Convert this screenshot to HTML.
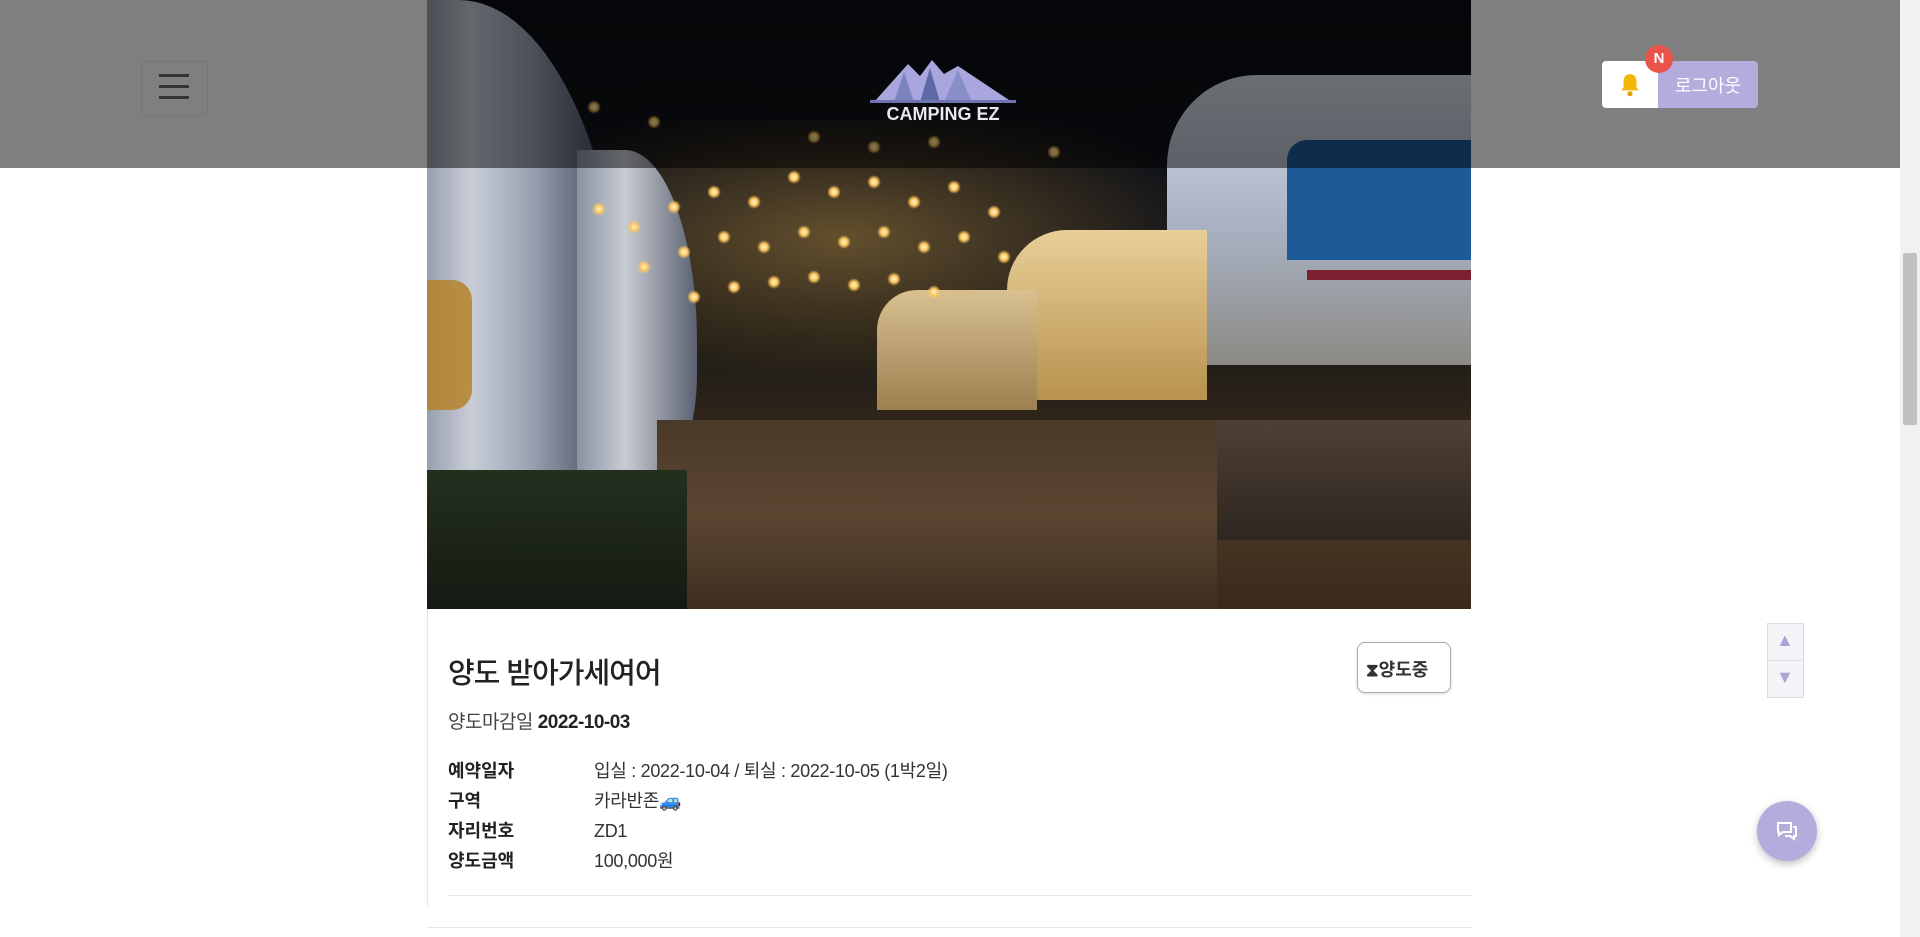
<!DOCTYPE html>
<html><head><meta charset="utf-8"><style>
*{margin:0;padding:0;box-sizing:border-box}
body{width:1920px;height:937px;overflow:hidden;background:#fff;font-family:"Liberation Sans","Noto Sans CJK KR",sans-serif;color:#222;position:relative}
.img{position:absolute;left:427px;top:0;width:1044px;height:609px;overflow:hidden;
background:linear-gradient(180deg,#0a0d12 0%,#10141a 40%,#1a1a16 55%,#2e241a 68%,#4a3624 85%,#3a2a1c 100%)}
.hdr{position:absolute;left:0;top:0;width:1920px;height:168px;background:rgba(0,0,0,0.5)}
.card{position:absolute;left:427px;top:609px;width:1044px;height:297px;border-left:1px solid #e6e6e6}
.sb{position:absolute;left:1900px;top:0;width:20px;height:937px;background:#f1f1f1}
.sb i{position:absolute;left:3px;top:253px;width:14px;height:172px;background:#c1c1c1;border-radius:2px}
.t{position:absolute;white-space:nowrap}
.l{position:absolute;width:14px;height:14px;border-radius:50%;background:radial-gradient(circle,#fff6d0 0,#ffc860 35%,rgba(255,180,60,0) 70%)}
</style></head><body>
<div class="img">
 <div style="position:absolute;left:100px;top:120px;width:700px;height:260px;background:radial-gradient(ellipse at 45% 45%,rgba(255,190,80,.35),rgba(255,170,60,.1) 50%,transparent 70%)"></div>
 <div style="position:absolute;left:-40px;top:0;width:240px;height:540px;background:linear-gradient(90deg,#6c7484 0%,#c9ced8 35%,#9aa2b2 60%,#4a5060 90%);border-radius:0 70% 30% 0"></div>
 <div style="position:absolute;left:150px;top:150px;width:120px;height:320px;background:linear-gradient(90deg,#8a92a2,#c8ccd4 40%,#5a6070);border-radius:0 60% 30% 0"></div>
 <div style="position:absolute;left:0;top:280px;width:45px;height:130px;background:#b5822a;opacity:.85;border-radius:0 20px 20px 0"></div>
 <div style="position:absolute;left:740px;top:75px;width:304px;height:290px;background:linear-gradient(180deg,#d6dbe4,#aab4c6 50%,#8c8a84);border-radius:90px 0 0 0"></div>
 <div style="position:absolute;left:860px;top:140px;width:184px;height:120px;background:#1d5a98;border-radius:20px 0 0 0"></div>
 <div style="position:absolute;left:880px;top:270px;width:164px;height:10px;background:#7a2030"></div>
 <div style="position:absolute;left:580px;top:230px;width:200px;height:170px;background:linear-gradient(180deg,#e8cf98,#b8924e);border-radius:60px 0 0 0"></div>
 <div style="position:absolute;left:450px;top:290px;width:160px;height:120px;background:linear-gradient(180deg,#d8c090,#9c8050);border-radius:40px 0 0 0"></div>
 <div style="position:absolute;left:420px;top:420px;width:624px;height:120px;background:linear-gradient(180deg,#4e4034,#2e2620)"></div>
 <div style="position:absolute;left:230px;top:420px;width:560px;height:189px;background:linear-gradient(180deg,#4a3828,#5c4632 50%,#3e2e20)"></div>
 <div style="position:absolute;left:0;top:470px;width:260px;height:139px;background:linear-gradient(180deg,#24301f,#141a12)"></div>
 <div class="l" style="left:165px;top:202px"></div><div class="l" style="left:200px;top:220px"></div><div class="l" style="left:240px;top:200px"></div><div class="l" style="left:280px;top:185px"></div><div class="l" style="left:320px;top:195px"></div><div class="l" style="left:360px;top:170px"></div><div class="l" style="left:400px;top:185px"></div><div class="l" style="left:440px;top:175px"></div><div class="l" style="left:480px;top:195px"></div><div class="l" style="left:520px;top:180px"></div><div class="l" style="left:560px;top:205px"></div>
 <div class="l" style="left:210px;top:260px"></div><div class="l" style="left:250px;top:245px"></div><div class="l" style="left:290px;top:230px"></div><div class="l" style="left:330px;top:240px"></div><div class="l" style="left:370px;top:225px"></div><div class="l" style="left:410px;top:235px"></div><div class="l" style="left:450px;top:225px"></div><div class="l" style="left:490px;top:240px"></div><div class="l" style="left:530px;top:230px"></div><div class="l" style="left:570px;top:250px"></div>
 <div class="l" style="left:260px;top:290px"></div><div class="l" style="left:300px;top:280px"></div><div class="l" style="left:340px;top:275px"></div><div class="l" style="left:380px;top:270px"></div><div class="l" style="left:420px;top:278px"></div><div class="l" style="left:460px;top:272px"></div><div class="l" style="left:500px;top:285px"></div>
 <div class="l" style="left:160px;top:100px"></div><div class="l" style="left:220px;top:115px"></div><div class="l" style="left:380px;top:130px"></div><div class="l" style="left:440px;top:140px"></div><div class="l" style="left:500px;top:135px"></div><div class="l" style="left:620px;top:145px"></div>
</div>
<div class="hdr"></div>
<div style="position:absolute;left:141px;top:61px;width:67px;height:55px;border:1px solid rgba(0,0,0,.08);border-radius:4px"></div>
<div style="position:absolute;left:159px;top:74px;width:30px;height:3px;background:#333"></div>
<div style="position:absolute;left:159px;top:85px;width:30px;height:3px;background:#333"></div>
<div style="position:absolute;left:159px;top:96px;width:30px;height:3px;background:#333"></div>
<svg style="position:absolute;left:868px;top:58px" width="150" height="64" viewBox="0 0 150 64">
<polygon points="6,44 40,6 52,18 64,2 76,16 90,8 144,44" fill="#a8a6dc"/>
<polygon points="26,44 36,14 46,44" fill="#7c84c0"/>
<polygon points="52,44 62,10 72,44" fill="#5e6aa8"/>
<polygon points="76,44 90,12 104,44" fill="#8a8ec8"/>
<rect x="2" y="42" width="146" height="3" fill="#6d74b0"/>
<text x="75" y="62" text-anchor="middle" font-family="Liberation Sans" font-weight="bold" font-size="18" fill="#e8e8f0">CAMPING EZ</text>
</svg>
<div style="position:absolute;left:1602px;top:61px;width:56px;height:47px;background:#fff;border-radius:4px 0 0 4px"></div>
<svg style="position:absolute;left:1617px;top:72px" width="26" height="26" viewBox="0 0 24 24"><path d="M12 2c-4 0-6 3-6 7v5l-2 3h16l-2-3V9c0-4-2-7-6-7z" fill="#f2b705"/><circle cx="12" cy="20" r="2.4" fill="#e2a000"/></svg>
<div style="position:absolute;left:1658px;top:61px;width:100px;height:47px;background:#b3acdc;border-radius:0 4px 4px 0"></div>
<div class="t" style="left:1658px;top:72px;width:100px;text-align:center;color:#fff;font-size:18px">로그아웃</div>
<div style="position:absolute;left:1645px;top:45px;width:28px;height:28px;border-radius:50%;background:#e8544a;color:#fff;font-weight:bold;font-size:15px;text-align:center;line-height:28px">N</div>
<div class="card"></div>
<div class="t" style="left:448px;top:650px;font-size:29px;color:#222;font-weight:500;letter-spacing:-1px">양도 받아가세여어</div>
<div style="position:absolute;left:1357px;top:642px;width:94px;height:51px;border:1px solid #aaa;border-radius:8px;box-shadow:0 1px 3px rgba(0,0,0,.15)"></div>
<div class="t" style="left:1366px;top:656px;font-size:18px;color:#333;font-weight:bold">⧗양도중</div>
<div class="t" style="left:448px;top:707px;font-size:19px;color:#444;letter-spacing:-.5px">양도마감일 <b style="color:#222">2022-10-03</b></div>
<div class="t" style="left:448px;top:756px;font-size:18px;line-height:30px;font-weight:bold;color:#222">예약일자<br>구역<br>자리번호<br>양도금액</div>
<div class="t" style="left:594px;top:756px;font-size:18px;line-height:30px;color:#333;letter-spacing:-.3px">입실 : 2022-10-04 / 퇴실 : 2022-10-05 (1박2일)<br>카라반존🚙<br>ZD1<br>100,000원</div>
<div style="position:absolute;left:448px;top:895px;width:1023px;height:1px;background:#e6e6e6"></div>
<div style="position:absolute;left:427px;top:927px;width:1044px;height:1px;background:#e6e6e6"></div>
<div style="position:absolute;left:1767px;top:623px;width:37px;height:75px;border:1px solid #ddd;background:#f4f4f8"></div>
<div style="position:absolute;left:1767px;top:660px;width:37px;height:1px;background:#ddd"></div>
<div class="t" style="left:1776px;top:630px;font-size:18px;color:#a9a6d6">▲</div>
<div class="t" style="left:1776px;top:667px;font-size:18px;color:#a9a6d6">▼</div>
<div style="position:absolute;left:1757px;top:801px;width:60px;height:60px;border-radius:50%;background:#b3acdc;box-shadow:0 3px 8px rgba(0,0,0,.25)"></div>
<svg style="position:absolute;left:1775px;top:820px" width="24" height="22" viewBox="0 0 24 22"><path d="M3 3h13v9H8l-4 3v-3H3z" fill="none" stroke="#fff" stroke-width="2"/><path d="M18 7h3v9h-2v3l-4-3h-5" fill="none" stroke="#fff" stroke-width="2"/></svg>
<div class="sb"><i></i></div>
</body></html>
